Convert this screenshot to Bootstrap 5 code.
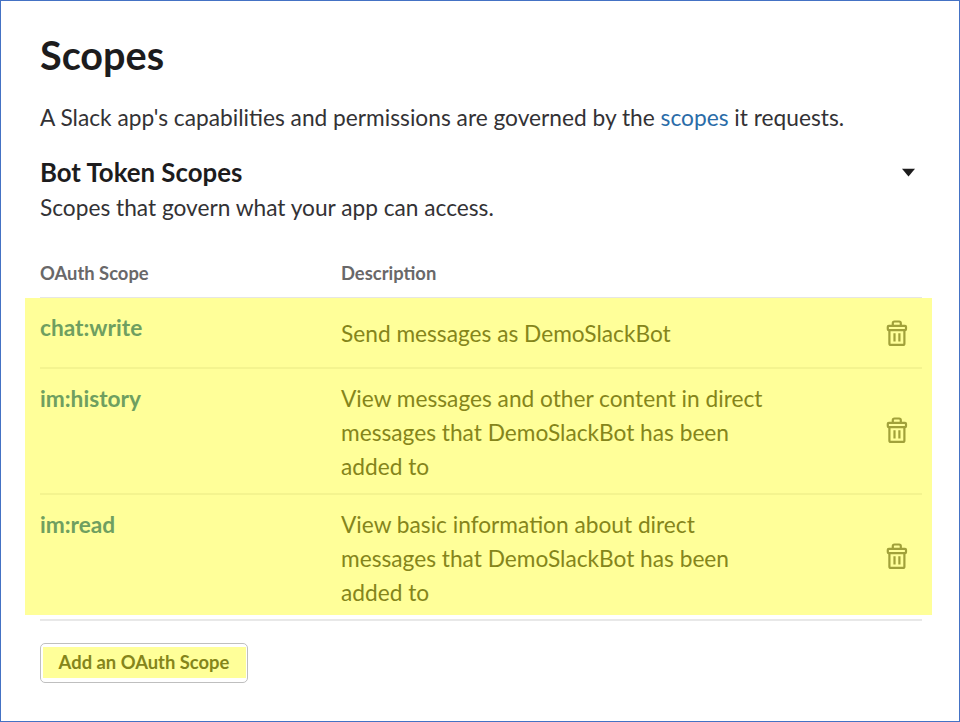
<!DOCTYPE html>
<html lang="en">
<head>
<meta charset="utf-8">
<meta name="viewport" content="width=device-width, initial-scale=1">
<title>Scopes</title>
<link href="https://cdn.jsdelivr.net/npm/bootstrap@5.3.0/dist/css/bootstrap.min.css" rel="stylesheet">
<style>
body{font-family:Lato,"Liberation Sans",sans-serif;font-size:22.7px;line-height:34px;color:#333235;background:#fff}
.page{width:960px;height:722px;border:1px solid #4472c4;padding:30px 37px 0 39px;overflow:hidden}
h1{font-size:39.6px;line-height:48px;font-weight:700;color:#1d1c1d}
.intro{margin-top:22px;font-size:22.73px}
.intro a{color:#2a6ca8}
.sub-head{margin-top:19px}
h2{font-size:25.8px;line-height:36px;font-weight:700;color:#1d1c1d}
.caret{margin:2px 6px 0 0;display:block}
.sub-text{margin-top:1px}
.head-row{margin-top:33px;height:40px;font-size:18.4px;line-height:30px;font-weight:700;color:#696869;border-bottom:1px solid #e6e6e4}
.scope-name{width:301px;flex:none}
.scopes{background:#ffff99;margin:0 -10px 0 -15px;padding:0 10px 0 15px;height:317px;color:#85851b}
.scope-row{border-bottom:2px solid #f4f48f;height:126px;padding-top:13px}
.scope-row:last-child{border-bottom:0}
.row-a{height:71px}
.row-a .scope-text{padding-top:6px}
.scope-row .scope-name{font-weight:700;color:#6f9f60}
.scope-text{width:430px}
.trash{margin:35px 14px 0 0;display:block;color:#a1a13a}
.row-a .trash{margin-top:9px}
.end-line{height:2px;margin-top:4px;background:#e8e8e8}
.add{margin-top:22px;width:208px;height:40px;border:1px solid #bfbfbf;border-radius:5px;padding:3px 1px 4px 2px;background:#fff}
.add span{background:#ffff99;color:#85851b;font-size:18.4px;line-height:31px;font-weight:700;height:31px;padding-right:1px}
</style>
<script src="https://cdn.jsdelivr.net/npm/bootstrap@5.3.0/dist/js/bootstrap.bundle.min.js"></script>
</head>
<body>
<svg class="d-none"><symbol id="trash" viewBox="0 0 22 27"><g fill="none" stroke="currentColor" stroke-width="2.2" stroke-linejoin="round"><path d="M6.8 5.6V3.2Q6.8 1.5 8.5 1.5H13.1Q14.8 1.5 14.8 3.2V5.6"/><rect x="1.8" y="5.8" width="18.2" height="4.4" rx="1"/><path d="M3.4 10.3V23.4Q3.4 24.9 4.9 24.9H16.9Q18.4 24.9 18.4 23.4V10.3M8.5 13.2V21.4M13.4 13.2V21.4"/></g></symbol></svg>
<main class="page">
  <h1 class="mb-0">Scopes</h1>
  <p class="intro mb-0">A Slack app's capabilities and permissions are governed by the <a href="#" class="text-decoration-none">scopes</a> it requests.</p>
  <div class="sub-head d-flex justify-content-between align-items-center">
    <h2 class="mb-0">Bot Token Scopes</h2>
    <svg class="caret" width="15" height="10" viewBox="0 0 15 10"><path d="M1 .8H14L7.5 8.5Z" fill="#1d1c1d"/></svg>
  </div>
  <p class="sub-text mb-0">Scopes that govern what your app can access.</p>
  <div class="head-row d-flex"><div class="scope-name">OAuth Scope</div><div>Description</div></div>
  <div class="scopes">
    <div class="scope-row row-a d-flex"><div class="scope-name">chat:write</div><div class="scope-text">Send messages as DemoSlackBot</div><svg class="trash ms-auto" width="22" height="27"><use href="#trash"/></svg></div>
    <div class="scope-row d-flex"><div class="scope-name">im:history</div><div class="scope-text">View messages and other content in direct messages that DemoSlackBot has been added to</div><svg class="trash ms-auto" width="22" height="27"><use href="#trash"/></svg></div>
    <div class="scope-row d-flex"><div class="scope-name">im:read</div><div class="scope-text">View basic information about direct messages that DemoSlackBot has been added to</div><svg class="trash ms-auto" width="22" height="27"><use href="#trash"/></svg></div>
  </div>
  <div class="end-line"></div>
  <button type="button" class="add d-flex"><span class="d-block w-100">Add an OAuth Scope</span></button>
</main>
</body>
</html>
